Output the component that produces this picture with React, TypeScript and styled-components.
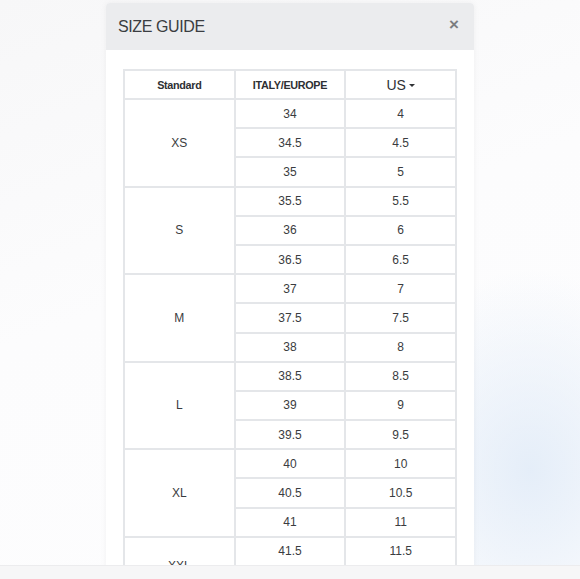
import React from "react";
import styled, { createGlobalStyle } from "styled-components";

const Global = createGlobalStyle`
  html, body { margin: 0; padding: 0; }
  body {
    width: 580px;
    height: 579px;
    overflow: hidden;
    font-family: "Liberation Sans", Arial, sans-serif;
    background: #f6f6f7;
  }
`;

const Shot = styled.div`
  width: 580px;
  height: 566px;
  overflow: hidden;
  border-bottom: 1px solid #ececee;
  background:
    radial-gradient(ellipse 160px 200px at 530px 470px, rgba(226, 236, 248, 0.9), rgba(226, 236, 248, 0) 100%),
    linear-gradient(160deg, #f7f7f8 0%, #fcfcfd 45%, #fdfdfe 100%);
  display: flex;
  justify-content: center;
  padding-top: 3px;
  box-sizing: border-box;
`;

const Modal = styled.div`
  width: 368px;
  background: #ffffff;
  border-radius: 4px 4px 0 0;
  box-shadow: 0 0 6px rgba(0, 0, 0, 0.05);
  display: flex;
  flex-direction: column;
  align-self: flex-start;
`;

const Header = styled.div`
  height: 47px;
  background: #ebecee;
  border-radius: 4px 4px 0 0;
  display: flex;
  align-items: center;
  justify-content: space-between;
  padding: 0 14px 0 12px;
  box-sizing: border-box;
`;

const Title = styled.h2`
  margin: 0;
  font-size: 16px;
  font-weight: 400;
  letter-spacing: -0.4px;
  color: #3a3d41;
  padding-top: 1px;
`;

const Close = styled.button`
  border: none;
  background: none;
  padding: 0;
  font-family: "Liberation Sans", Arial, sans-serif;
  font-size: 17px;
  font-weight: 700;
  color: #7b7d80;
  line-height: 1;
  margin-top: -4px;
  margin-right: 1px;
`;

const Body = styled.div`
  padding: 19px 17px 0 17px;
`;

const Table = styled.table`
  width: 334px;
  border-collapse: collapse;
  table-layout: fixed;
  border: 2px solid #e4e6e9;
`;

const Th = styled.th<{ $big?: boolean }>`
  height: 27px;
  border: 2px solid #e4e6e9;
  text-align: center;
  vertical-align: middle;
  color: #2e3034;
  font-size: ${(p) => (p.$big ? "14px" : "10.8px")};
  font-weight: ${(p) => (p.$big ? 400 : 700)};
  letter-spacing: ${(p) => (p.$big ? "0" : "-0.3px")};
  padding: 0;
`;

const Td = styled.td`
  height: 27.2px;
  border: 2px solid #e4e6e9;
  text-align: center;
  vertical-align: middle;
  color: #3a3c40;
  font-size: 12px;
  padding: 0;
`;

const Caret = styled.span`
  display: inline-block;
  width: 0;
  height: 0;
  border-left: 3px solid transparent;
  border-right: 3px solid transparent;
  border-top: 3.5px solid #303236;
  margin-left: 3px;
  vertical-align: 3px;
`;

const groups: { std: string; rows: [string, string][] }[] = [
  { std: "XS", rows: [["34", "4"], ["34.5", "4.5"], ["35", "5"]] },
  { std: "S", rows: [["35.5", "5.5"], ["36", "6"], ["36.5", "6.5"]] },
  { std: "M", rows: [["37", "7"], ["37.5", "7.5"], ["38", "8"]] },
  { std: "L", rows: [["38.5", "8.5"], ["39", "9"], ["39.5", "9.5"]] },
  { std: "XL", rows: [["40", "10"], ["40.5", "10.5"], ["41", "11"]] },
  { std: "XXL", rows: [["41.5", "11.5"], ["42", "12"]] },
];

export default function App() {
  return (
    <>
      <Global />
      <Shot>
        <Modal>
          <Header>
            <Title>SIZE GUIDE</Title>
            <Close aria-label="close">×</Close>
          </Header>
          <Body>
            <Table>
              <thead>
                <tr>
                  <Th>Standard</Th>
                  <Th>ITALY/EUROPE</Th>
                  <Th $big>
                    US<Caret />
                  </Th>
                </tr>
              </thead>
              <tbody>
                {groups.map((g) =>
                  g.rows.map((r, i) => (
                    <tr key={g.std + r[0]}>
                      {i === 0 && <Td rowSpan={g.rows.length}>{g.std}</Td>}
                      <Td>{r[0]}</Td>
                      <Td>{r[1]}</Td>
                    </tr>
                  ))
                )}
              </tbody>
            </Table>
          </Body>
        </Modal>
      </Shot>
    </>
  );
}
